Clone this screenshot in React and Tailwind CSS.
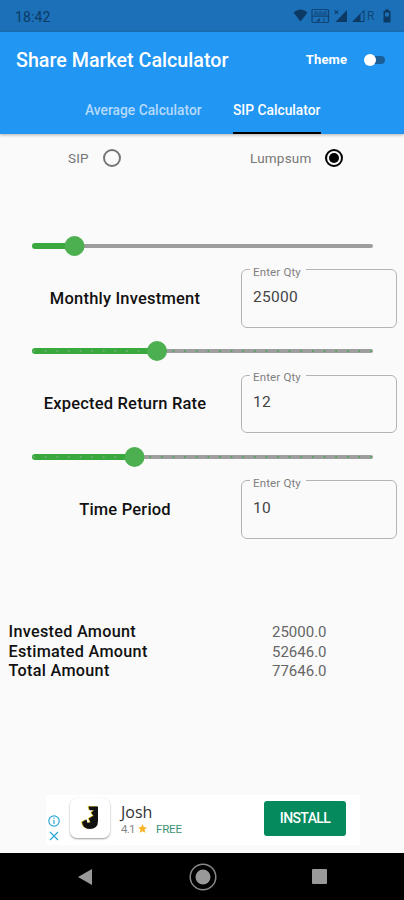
import React from 'react';
import clsx from 'clsx';

const TRACK_WIDTH = 341;

const FIELDS = [
  { label: 'Monthly Investment', value: '25000', thumb: 42.5, ticks: 0 },
  { label: 'Expected Return Rate', value: '12', thumb: 125, ticks: 30 },
  { label: 'Time Period', value: '10', thumb: 102.5, ticks: 30 },
];

const RESULTS = [
  { label: 'Invested Amount', value: '25000.0' },
  { label: 'Estimated Amount', value: '52646.0' },
  { label: 'Total Amount', value: '77646.0' },
];

function StatusBar() {
  return (
    <div className="flex h-8 shrink-0 items-center justify-between bg-[#1b70b7] pl-[15px] text-[#0c3a64]">
      <span className="pt-0.5 text-[14px] tracking-[0.1px]">18:42</span>
      <svg width="112" height="32" viewBox="292 0 112 32" fill="currentColor">
        <path d="M293.5 12.5Q300.500 6.500 307.500 12.500L300.500 21.500Z" />
        <rect x="312" y="9.500" width="16.500" height="13" rx="1" fill="none" stroke="currentColor" strokeWidth="1.200" opacity=".8" />
        <path opacity=".8" d="M314 11.500h4v1h-4zM319 11.500h3v1h-3zM323 11.500h4v1h-4zM314 13.500h13v1h-13zM312 15.500h17v1.200h-17zM320 18v3.500h-4.500zM323.500 18h1v3.500h-1z" />
        <path d="M347 10V22H335.500ZM335 10l3.500 3.500-.7.700L334.300 10.700ZM337.800 10l.7.700-3.500 3.500-.7-.7Z" />
        <path d="M364 10.500V21.500H353Z" fill="none" stroke="currentColor" strokeWidth="1" />
        <path d="M360.500 14V22H352.500Z" />
        <text x="367" y="20" fontSize="12" fontFamily="Roboto, sans-serif" opacity=".75">R</text>
        <path fillRule="evenodd" d="M385 9.500h4v1.500h1.500v11.500h-7V11h1.500ZM385 12.500v4h4v-4Z" />
      </svg>
    </div>
  );
}

function AppBar() {
  return (
    <header className="z-10 flex h-[102px] shrink-0 flex-col bg-[#2196f3] text-white shadow-[0_1px_3px_rgba(0,0,0,0.3)]">
      <div className="flex h-[54px] items-center pl-4 pr-[18px]">
        <h1 className="grow pt-[3px] text-[19.700px] font-medium leading-6">Share Market Calculator</h1>
        <span className="mr-[17px] pt-0.5 text-[13px] font-bold tracking-[0.1px]">Theme</span>
        <span className="flex h-[13px] w-[22px] items-center pt-px">
          <span className="z-10 size-3 shrink-0 rounded-full bg-white" />
          <span className="-ml-1.5 mr-px h-2 grow rounded-full bg-[#1c5f98]" />
        </span>
      </div>
      <nav className="flex h-12 pl-[85px] text-[13.800px] font-medium">
        <span className="w-[148px] pt-3.5 leading-5 text-[#b5dafb]">Average Calculator</span>
        <span className="w-[88px] whitespace-nowrap border-b-[2px] border-black pt-3.5 leading-5">SIP Calculator</span>
      </nav>
    </header>
  );
}

function Radio({ checked }) {
  return (
    <span
      className={clsx(
        'flex size-[18px] items-center justify-center rounded-full border-2',
        checked ? 'border-black' : 'border-[#757575]'
      )}
    >
      {checked && <span className="size-2.5 rounded-full bg-black" />}
    </span>
  );
}

function Slider({ thumb, ticks }) {
  return (
    <div className="flex h-6 w-[341px] items-center">
      <svg width={TRACK_WIDTH} height="24">
        <rect x={thumb} y="10" width={TRACK_WIDTH - thumb} height="4" rx="2" fill="#9e9e9e" />
        <rect x="0" y="9" width={thumb + 2} height="6" rx="3" fill="#39a93d" />
        {Array.from({ length: ticks }, (_, i) => {
          const x = 2 + (i * (TRACK_WIDTH - 4)) / (ticks - 1);
          return (
            <circle key={i} cx={x} cy="12" r="1" fill={x < thumb ? '#6fae70' : '#4ca656'} />
          );
        })}
        <circle cx={thumb} cy="12" r="10" fill="#4caf50" />
      </svg>
    </div>
  );
}

function Field({ label, value, thumb, ticks }) {
  return (
    <section className="h-[105.500px] pl-8">
      <Slider thumb={thumb} ticks={ticks} />
      <div className="mt-3 flex h-[58px] items-center">
        <span className="w-[186px] pt-px text-center text-[16.500px] font-medium tracking-[0.2px] text-[#111]">{label}</span>
        <fieldset className="-mt-[9px] ml-[23px] h-[67px] w-[156px] rounded-[6px] border border-[#b4b4b4] pl-[11px]">
          <legend className="-ml-[3px] h-[18px] pl-[3px] pr-[5px] text-[11.500px] leading-[18px] text-[#808080]">
            <span className="relative top-[2px] tracking-[0.15px]">Enter Qty</span>
          </legend>
          <div className="pt-[8px] text-[15.500px] leading-5 tracking-[0.3px] text-[#444]">{value}</div>
        </fieldset>
      </div>
    </section>
  );
}

function AdBanner() {
  return (
    <div className="ml-[46px] flex h-[50px] w-[314px] shrink-0 items-center bg-white">
      <svg className="ml-0.5 mt-[17px]" width="12" height="30" fill="none" stroke="#2da7d8" strokeWidth="1.200">
        <circle cx="6" cy="7" r="5.200" />
        <path d="M6 6v4M6 3.500v1.300M2 18l8 8M10 18l-8 8" />
      </svg>
      <div className="-mt-1 ml-[10px] flex size-10 items-center justify-center rounded-[7px] bg-white shadow-[0_1px_2px_rgba(0,0,0,0.4)]">
        <svg width="22" height="26" viewBox="0 0 22 26">
          <path
            id="bolt"
            d="M9.500 1.500H19V16q0 8-8.500 8-6.500 0-7.500-7l4.500-2.500L8.500 18l3-.8-1.700-3.700 4.700-2.700-2.300-3 2.800-2.600h-4.300Z"
            fill="#e5c52e"
            transform="translate(-1 -.3)"
          />
          <path
            d="M9.500 1.500H19V16q0 8-8.500 8-6.500 0-7.500-7l4.500-2.500L8.500 18l3-.8-1.700-3.700 4.700-2.700-2.300-3 2.800-2.600h-4.300Z"
            fill="#111"
          />
        </svg>
      </div>
      <div className="ml-[11px] -mt-px grow">
        <div className="font-['Open_Sans',sans-serif] text-[16px] leading-[18px] text-[#333]">Josh</div>
        <div className="flex items-center text-[11.500px] leading-4">
          <span className="w-[13px] tracking-[-0.7px] text-[#888]">4.1</span>
          <svg className="ml-1" width="9" height="9" viewBox="0 0 24 24" fill="#f9b428">
            <path d="m12 0 3.500 8.200 8.500.8-6.500 5.800 2 8.700L12 19l-7.500 4.500 2-8.700L0 9l8.500-.8z" />
          </svg>
          <span className="ml-[9px] tracking-[-0.2px] text-[#3b9475]">FREE</span>
        </div>
      </div>
      <button className="-mt-[4px] mr-[14px] h-[35px] w-[82px] rounded-[3px] bg-[#058a5e] text-[14px] font-medium tracking-[-0.6px] text-white">
        INSTALL
      </button>
    </div>
  );
}

function NavBar() {
  return (
    <div className="mt-2 flex h-[47px] shrink-0 items-center bg-black pl-[77px]">
      <svg width="16" height="18" fill="#999">
        <path d="M15 1v16L1 9Z" />
      </svg>
      <svg className="ml-[96px]" width="28" height="28">
        <circle cx="14" cy="14" r="12.800" fill="none" stroke="#888" strokeWidth="1.500" />
        <circle cx="14" cy="14" r="7.500" fill="#999" />
      </svg>
      <span className="ml-[94.500px] size-[15px] rounded-[1px] bg-[#999]" />
    </div>
  );
}

export default function App() {
  return (
    <div className="flex h-[900px] w-[404px] flex-col overflow-hidden bg-[#fafafa] font-[Roboto,sans-serif]">
      <StatusBar />
      <AppBar />
      <div className="flex h-12 shrink-0 items-center text-[13.500px] tracking-[0.15px] text-[#777]">
        <span className="ml-[68px] w-[35px]">SIP</span>
        <Radio />
        <span className="ml-[129px] w-[75px] tracking-[0.2px]">Lumpsum</span>
        <Radio checked />
      </div>
      <main className="grow pt-[51.500px]">
        {FIELDS.map((field) => (
          <Field key={field.label} {...field} />
        ))}
        <dl className="mt-[72px] pl-[8.500px]">
          {RESULTS.map(({ label, value }) => (
            <div key={label} className="flex h-[19.700px] items-center leading-5">
              <dt className="w-[263.500px] text-[16.200px] font-medium tracking-[0.3px] text-[#111]">{label}</dt>
              <dd className="text-[15px] text-[#666]">{value}</dd>
            </div>
          ))}
        </dl>
      </main>
      <AdBanner />
      <NavBar />
    </div>
  );
}
